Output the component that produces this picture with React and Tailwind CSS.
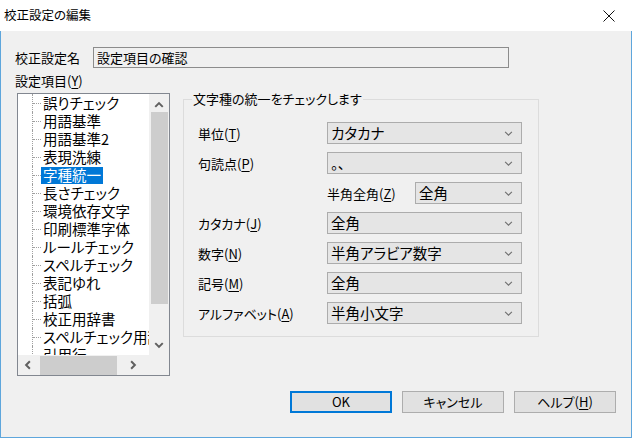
import React from 'react';

const jp = "font-['Noto_Sans_CJK_JP',sans-serif] [font-feature-settings:'palt']";

const treeItems = [
    '誤りチェック',
    '用語基準',
    '用語基準2',
    '表現洗練',
    '字種統一',
    '長さチェック',
    '環境依存文字',
    '印刷標準字体',
    'ルールチェック',
    'スペルチェック',
    '表記ゆれ',
    '括弧',
    '校正用辞書',
    'スペルチェック用辞書',
    '引用行',
];

const Chevron = ({ dir = 'down', size = 8, color = '#606060', width = 1 }) => {
    const paths = {
        down: 'M1 2.5 L4 5.5 L7 2.5',
        up: 'M1 5.5 L4 2.5 L7 5.5',
        left: 'M5.5 1 L2.5 4 L5.5 7',
        right: 'M2.5 1 L5.5 4 L2.5 7',
    };
    return (
        <svg width={size} height={size} viewBox="0 0 8 8" fill="none">
            <path d={paths[dir]} stroke={color} strokeWidth={width} />
        </svg>
    );
};

const Mn = ({ children }) => <span className="underline underline-offset-2">{children}</span>;

const Combo = ({ value, width = 'w-[195px]' }) => (
    <div className={`${width} h-[22px] flex items-center justify-between bg-[#e5e5e5] border border-[#acacac] pl-[3px] pr-[8px] text-[14.5px] text-black`}>
        <span className="leading-none">{value}</span>
        <Chevron dir="down" size={9} color="#707070" width={1} />
    </div>
);

const FieldRow = ({ label, children }) => (
    <div className="flex items-center h-[22px]">
        <div className="w-[129px] text-[13px] leading-none">{label}</div>
        {children}
    </div>
);

const Button = ({ children, primary }) => (
    <button
        className={`w-[102px] h-[22px] flex items-center justify-center text-[13px] text-black bg-[#e1e1e1] ${
            primary ? 'border-2 border-[#0078d7]' : 'border border-[#adadad]'
        }`}
    >
        {children}
    </button>
);

const Tree = () => (
    <div className="w-[153px] h-[283px] border border-[#828790] bg-white flex flex-col">
        <div className="flex flex-1 min-h-0">
            <div className="w-[131px] shrink-0 overflow-hidden">
                {treeItems.map((item, i) => (
                    <div key={item} className="flex h-[18px] pl-[14px] items-stretch">
                        <div className="w-[9px] shrink-0 border-l border-dotted border-[#a0a0a0] flex items-center">
                            <div className="w-full border-t border-dotted border-[#a0a0a0]" />
                        </div>
                        <div className="flex items-center shrink-0">
                            <span
                                className={`px-[2px] h-[17px] flex items-center whitespace-nowrap text-[14.5px] leading-none ${
                                    i === 4 ? 'bg-[#0078d7] text-white' : 'text-black'
                                }`}
                            >
                                {item}
                            </span>
                        </div>
                    </div>
                ))}
            </div>
            {/* vertical scrollbar */}
            <div className="w-[20px] bg-[#f0f0f0] flex flex-col items-center">
                <div className="h-[17px] w-full flex items-end justify-center pb-[1px]">
                    <Chevron dir="up" size={10} color="#606060" width={1.6} />
                </div>
                <div className="w-[17px] h-[192px] mt-[1px] bg-[#cdcdcd]" />
                <div className="flex-1" />
                <div className="h-[20px] w-full flex items-center justify-center">
                    <Chevron dir="down" size={10} color="#606060" width={1.6} />
                </div>
            </div>
        </div>
        {/* horizontal scrollbar */}
        <div className="h-[20px] flex">
            <div className="w-[131px] bg-[#f0f0f0] flex items-center">
                <div className="w-[20px] flex justify-center">
                    <Chevron dir="left" size={10} color="#606060" width={1.6} />
                </div>
                <div className="ml-[2px] w-[77px] h-[19px] bg-[#cdcdcd]" />
                <div className="flex-1 flex justify-center">
                    <Chevron dir="right" size={10} color="#606060" width={1.6} />
                </div>
            </div>
            <div className="flex-1 bg-[#f0f0f0]" />
        </div>
    </div>
);

export default function App() {
    return (
        <div className={`w-[632px] h-[438px] flex flex-col bg-[#f0f0f0] text-black ${jp}`}>
            {/* Title bar */}
            <div className="h-[31px] bg-white flex items-center justify-between pl-[4px] pr-[17px]">
                <span className="text-[12.5px] leading-none">校正設定の編集</span>
                <svg width="12" height="12" viewBox="0 0 12 12">
                    <path d="M0.5 0.5 L11.5 11.5 M11.5 0.5 L0.5 11.5" stroke="#111" strokeWidth="1" />
                </svg>
            </div>

            {/* Body */}
            <div className="flex-1 flex flex-col border-x border-b border-[#5ea6dc] pl-[14px] pt-[16px]">
                <div className="flex items-center h-[21px]">
                    <div className="w-[78px] text-[13px] leading-none">校正設定名</div>
                    <div className="w-[416px] h-[21px] border border-[#8c8c8c] bg-[#f0f0f0] flex items-center pl-[3px] text-[13px] leading-none">
                        設定項目の確認
                    </div>
                </div>
                <div className="mt-[3px] h-[18px] flex items-center text-[13px] leading-none">
                    設定項目(<Mn>Y</Mn>)
                </div>

                <div className="mt-[4px] flex items-start">
                    <div className="ml-[2px]">
                        <Tree />
                    </div>

                    <div className="relative ml-[13px] mt-[6px] w-[356px] h-[238px] border border-[#dcdcdc] pl-[14px] pt-[22px] flex flex-col gap-[8px]">
                        <span className="absolute -top-[8px] left-[8px] px-[1px] bg-[#f0f0f0] text-[13px] leading-none">
                            文字種の統一をチェックします
                        </span>
                        <FieldRow label={<>単位(<Mn>T</Mn>)</>}>
                            <Combo value="カタカナ" />
                        </FieldRow>
                        <FieldRow label={<>句読点(<Mn>P</Mn>)</>}>
                            <div className="w-[195px] h-[22px] flex items-center justify-between bg-[#e5e5e5] border border-[#acacac] pl-[3px] pr-[8px]">
                                <span className="text-[14px] leading-none self-end pb-[3px]">。、</span>
                                <Chevron dir="down" size={9} color="#707070" width={1} />
                            </div>
                        </FieldRow>
                        <FieldRow label="">
                            <div className="w-[88px] text-[13px] leading-none">
                                半角全角(<Mn>Z</Mn>)
                            </div>
                            <Combo value="全角" width="w-[107px]" />
                        </FieldRow>
                        <FieldRow label={<>カタカナ(<Mn>J</Mn>)</>}>
                            <Combo value="全角" />
                        </FieldRow>
                        <FieldRow label={<>数字(<Mn>N</Mn>)</>}>
                            <Combo value="半角アラビア数字" />
                        </FieldRow>
                        <FieldRow label={<>記号(<Mn>M</Mn>)</>}>
                            <Combo value="全角" />
                        </FieldRow>
                        <FieldRow label={<>アルファベット(<Mn>A</Mn>)</>}>
                            <Combo value="半角小文字" />
                        </FieldRow>
                    </div>
                </div>

                <div className="mt-[15px] flex justify-end gap-[10px] pr-[15px]">
                    <Button primary>OK</Button>
                    <Button>キャンセル</Button>
                    <Button>
                        ヘルプ(<Mn>H</Mn>)
                    </Button>
                </div>
            </div>
        </div>
    );
}
